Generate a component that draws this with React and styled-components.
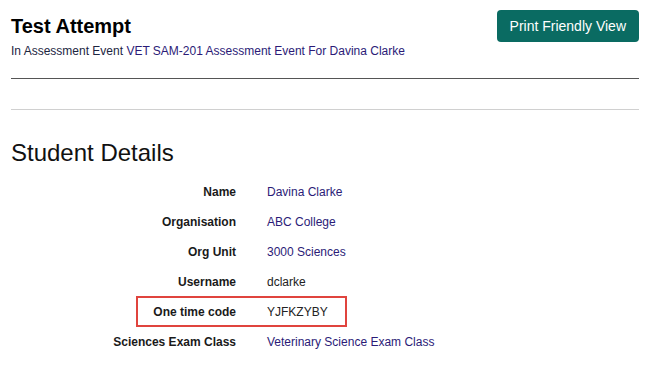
import React from 'react';
import styled, { createGlobalStyle } from 'styled-components';

const GlobalStyle = createGlobalStyle`
  body {
    margin: 0;
    background: #ffffff;
    font-family: "Liberation Sans", Arial, sans-serif;
    color: #222;
  }
`;

const Page = styled.div`
  padding: 10px 8px 0 11px;
`;

const Header = styled.div`
  display: flex;
  justify-content: space-between;
  align-items: flex-start;
`;

const TitleBlock = styled.div`
  padding-top: 4px;
`;

const Title = styled.h1`
  margin: 0;
  font-size: 20px;
  line-height: 24px;
  font-weight: bold;
  color: #000;
`;

const Subtitle = styled.div`
  margin-top: 5px;
  font-size: 12px;
  line-height: 16px;
  color: #1c2541;
`;

const Link = styled.a`
  color: #2b1b77;
  text-decoration: none;
`;

const PrintButton = styled.button`
  height: 32px;
  padding: 0 13px;
  border: none;
  border-radius: 4px;
  background-color: #0a6b62;
  color: #fff;
  font-family: inherit;
  font-size: 14px;
  cursor: pointer;
`;

const Rule = styled.hr`
  margin: ${(p) => p.$top}px 0 0;
  border: none;
  border-top: 1px solid ${(p) => p.$color};
`;

const SectionTitle = styled.h2`
  margin: 29px 0 0;
  font-size: 24px;
  line-height: 28px;
  font-weight: normal;
  color: #111;
`;

const Details = styled.div`
  margin-top: 10px;
  display: grid;
  grid-template-columns: 225px auto;
  column-gap: 31px;
  justify-content: start;
`;

const Row = styled.div`
  display: contents;
`;

const Label = styled.div`
  height: 30px;
  line-height: 30px;
  font-size: 12px;
  font-weight: bold;
  text-align: right;
  color: #1a1a1a;
  position: relative;

  ${(p) =>
    p.$highlight &&
    `
    &::after {
      content: "";
      position: absolute;
      left: 125px;
      width: 207px;
      top: -1px;
      bottom: 0;
      border: 2px solid #e0443e;
      pointer-events: none;
    }
  `}
`;

const Value = styled.div`
  height: 30px;
  line-height: 30px;
  font-size: 12px;
  color: ${(p) => (p.$link ? '#2b1b77' : '#222')};
`;

const rows = [
  { label: 'Name', value: 'Davina Clarke', link: true },
  { label: 'Organisation', value: 'ABC College', link: true },
  { label: 'Org Unit', value: '3000 Sciences', link: true },
  { label: 'Username', value: 'dclarke' },
  { label: 'One time code', value: 'YJFKZYBY', highlight: true },
  { label: 'Sciences Exam Class', value: 'Veterinary Science Exam Class', link: true },
];

const App = () => {
  return (
    <Page>
      <GlobalStyle />
      <Header>
        <TitleBlock>
          <Title>Test Attempt</Title>
          <Subtitle>
            In Assessment Event <Link href="#">VET SAM-201 Assessment Event For Davina Clarke</Link>
          </Subtitle>
        </TitleBlock>
        <PrintButton>Print Friendly View</PrintButton>
      </Header>

      <Rule $top={19} $color="#555" />
      <Rule $top={30} $color="#d0d0d0" />

      <SectionTitle>Student Details</SectionTitle>
      <Details>
        {rows.map((r) => (
          <Row key={r.label}>
            <Label $highlight={r.highlight}>{r.label}</Label>
            <Value $link={r.link}>{r.value}</Value>
          </Row>
        ))}
      </Details>
    </Page>
  );
};

export default App;
